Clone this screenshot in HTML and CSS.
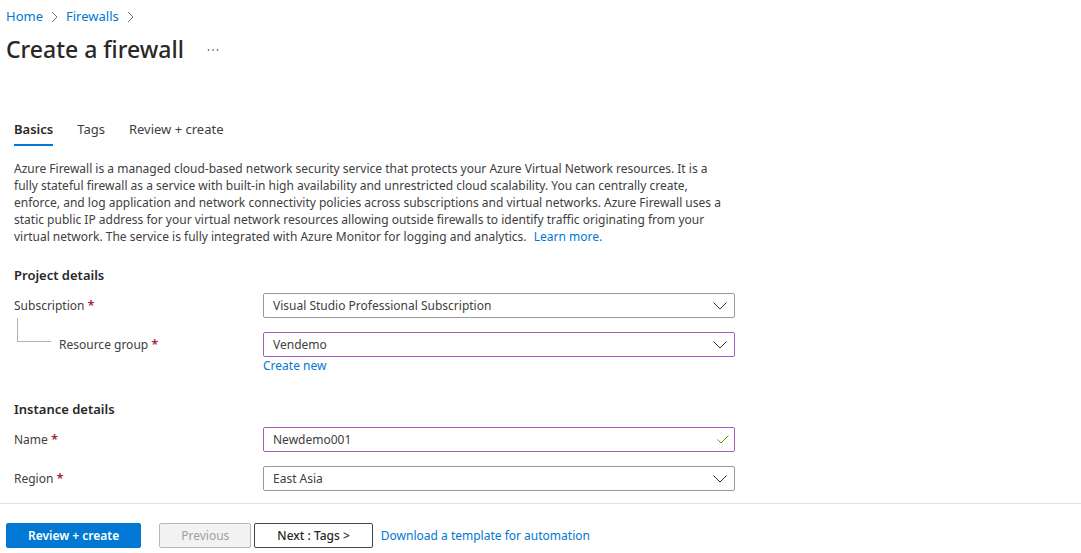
FILE: index.html
```html
<!DOCTYPE html>
<html lang="en">
<head>
<meta charset="utf-8">
<meta name="viewport" content="width=device-width, initial-scale=1">
<title>Create a firewall</title>
<link rel="stylesheet" href="styles.css">
</head>
<body>
<div class="page">
  <header class="header">
    <nav class="breadcrumb" aria-label="Breadcrumb">
      <a href="#home">Home</a>
      <svg class="crumb-arrow" viewBox="0 0 7 12" aria-hidden="true"><path d="M1 1l5 5-5 5"/></svg>
      <a href="#firewalls">Firewalls</a>
      <svg class="crumb-arrow" viewBox="0 0 7 12" aria-hidden="true"><path d="M1 1l5 5-5 5"/></svg>
    </nav>
    <div class="title-row">
      <h1 class="title">Create a firewall</h1>
      <button class="more" type="button" aria-label="More actions">
        <svg class="dots" viewBox="0 0 12 4" aria-hidden="true"><circle cx="1.500" cy="3" r=".8"/><circle cx="6" cy="3" r=".8"/><circle cx="10.500" cy="3" r=".8"/></svg>
      </button>
    </div>
  </header>

  <main class="content">
    <div class="tabs" role="tablist">
      <button class="tab tab-active" type="button" role="tab" aria-selected="true">Basics</button>
      <button class="tab" type="button" role="tab" aria-selected="false">Tags</button>
      <button class="tab" type="button" role="tab" aria-selected="false">Review + create</button>
    </div>

    <p class="intro">Azure Firewall is a managed cloud-based network security service that protects your Azure Virtual Network resources. It is a fully stateful firewall as a service with built-in high availability and unrestricted cloud scalability. You can centrally create, enforce, and log application and network connectivity policies across subscriptions and virtual networks. Azure Firewall uses a static public IP address for your virtual network resources allowing outside firewalls to identify traffic originating from your virtual network. The service is fully integrated with Azure Monitor for logging and analytics. <a class="learn" href="#learn">Learn more.</a></p>

    <form class="form" id="firewall-form">
      <section class="section">
        <h2 class="section-title">Project details</h2>
        <div class="row">
          <label class="label" for="subscription">Subscription <span class="required">*</span></label>
          <div class="control">
            <select class="field" id="subscription"><option>Visual Studio Professional Subscription</option></select>
            <svg class="chevron" viewBox="0 0 14 8" aria-hidden="true"><path d="M.5.5L7 7 13.500.5"/></svg>
          </div>
        </div>
        <div class="row">
          <div class="nested-label">
            <span class="branch"></span>
            <label class="label" for="group">Resource group <span class="required">*</span></label>
          </div>
          <div class="control">
            <select class="field field-edited" id="group"><option>Vendemo</option></select>
            <svg class="chevron" viewBox="0 0 14 8" aria-hidden="true"><path d="M.5.5L7 7 13.500.5"/></svg>
          </div>
          <a class="create-new" href="#new-group">Create new</a>
        </div>
      </section>

      <section class="section section-instance">
        <h2 class="section-title">Instance details</h2>
        <div class="row">
          <label class="label" for="name">Name <span class="required">*</span></label>
          <div class="control">
            <input class="field field-edited" id="name" type="text" value="Newdemo001">
            <svg class="check" viewBox="0 0 12 9" aria-hidden="true"><path d="M.5 4.500L4 8 11.500.5"/></svg>
          </div>
        </div>
        <div class="row">
          <label class="label" for="region">Region <span class="required">*</span></label>
          <div class="control">
            <select class="field" id="region"><option>East Asia</option></select>
            <svg class="chevron" viewBox="0 0 14 8" aria-hidden="true"><path d="M.5.5L7 7 13.500.5"/></svg>
          </div>
        </div>
      </section>
    </form>
  </main>

  <footer class="footer">
    <button class="button button-primary" type="submit" form="firewall-form">Review + create</button>
    <div class="steps">
      <button class="button button-previous" type="button" disabled>Previous</button>
      <button class="button button-next" type="button">Next : Tags &gt;</button>
    </div>
    <a href="#template">Download a template for automation</a>
  </footer>
</div>
</body>
</html>
```
FILE: styles.css
```css
* {
  box-sizing: border-box;
}

body {
  margin: 0;
  background: #fff;
  color: #404040;
  font: 12px/17px "Segoe UI", "Noto Sans", sans-serif;
}

button,
input,
select {
  margin: 0;
  font: inherit;
  color: inherit;
}

a {
  color: #0078d4;
  text-decoration: none;
}

svg {
  display: block;
  fill: none;
}

.page {
  display: flex;
  flex-direction: column;
  min-height: 100vh;
}

.header {
  padding: 8px 6px 0;
}

.breadcrumb {
  display: flex;
  align-items: center;
  gap: 8px;
  font-size: 13px;
}

.crumb-arrow {
  width: 7px;
  height: 12px;
  stroke: #777;
}

.title-row {
  display: flex;
  align-items: center;
  gap: 21px;
  margin-top: 8px;
}

.title {
  margin: 0;
  color: #292827;
  font-size: 23px;
  line-height: 32px;
  font-weight: 500;
}

.more {
  padding: 4px 2px;
  border: 0;
  background: none;
}

.dots {
  width: 12px;
  height: 4px;
  fill: #333;
}

.content {
  flex: 1;
  padding: 54px 14px 10px;
}

.tabs {
  display: flex;
  gap: 24px;
  font-size: 13px;
}

.tab {
  padding: 2px 0 6px;
  border: 0;
  border-bottom: 2px solid transparent;
  background: none;
}

.tab-active {
  border-bottom-color: #0078d4;
  color: #292827;
  font-weight: 600;
}

.intro {
  max-width: 714px;
  margin: 14px 0 0;
}

.learn {
  margin-left: 4px;
}

.form {
  max-width: 721px;
}

.section {
  margin-top: 21px;
}

.section-instance {
  margin-top: 26px;
}

.section-title {
  margin: 0 0 9px;
  color: #292827;
  font-size: 13px;
  line-height: 18px;
  font-weight: 600;
}

.row {
  display: grid;
  grid-template-columns: 249px 1fr;
  align-items: center;
}

.row + .row {
  margin-top: 14px;
}

.required {
  color: #a4262c;
  font-size: 13px;
  font-weight: 600;
}

.nested-label {
  display: flex;
  align-items: center;
  gap: 8px;
  padding-left: 3px;
}

.branch {
  align-self: flex-start;
  width: 34px;
  height: 24px;
  margin-top: -18px;
  border: solid #b3b3b3;
  border-width: 0 0 1px 1px;
}

.control {
  position: relative;
}

.field {
  display: block;
  width: 100%;
  height: 25px;
  padding: 0 28px 0 9px;
  border: 1px solid #999;
  border-radius: 2px;
  background: #fff;
  appearance: none;
}

.field-edited {
  border-color: #a95cc0;
}

.chevron {
  position: absolute;
  top: 9px;
  right: 8px;
  width: 14px;
  height: 8px;
  stroke: #333;
  pointer-events: none;
}

.check {
  position: absolute;
  top: 8px;
  right: 6px;
  width: 12px;
  height: 9px;
  stroke: #57a300;
  pointer-events: none;
}

.create-new {
  grid-column: 2;
  justify-self: start;
}

.footer {
  display: flex;
  align-items: center;
  gap: 8px;
  padding: 19px 6px 5px;
  border-top: 1px solid #e1e1e1;
}

.steps {
  display: flex;
  gap: 3px;
  margin-left: 10px;
}

.button {
  height: 25px;
  padding: 0 21px;
  border: 1px solid #444;
  border-radius: 2px;
  background: #fff;
  color: #292827;
  font-weight: 500;
}

.button-primary {
  border-color: #0078d4;
  background: #0078d4;
  color: #fff;
  font-weight: 600;
}

.button-previous {
  border-color: #b8b8b8;
  background: #f2f2f2;
  color: #a0a0a0;
  font-weight: 400;
}

.button-next {
  padding: 0 22px;
}
```
